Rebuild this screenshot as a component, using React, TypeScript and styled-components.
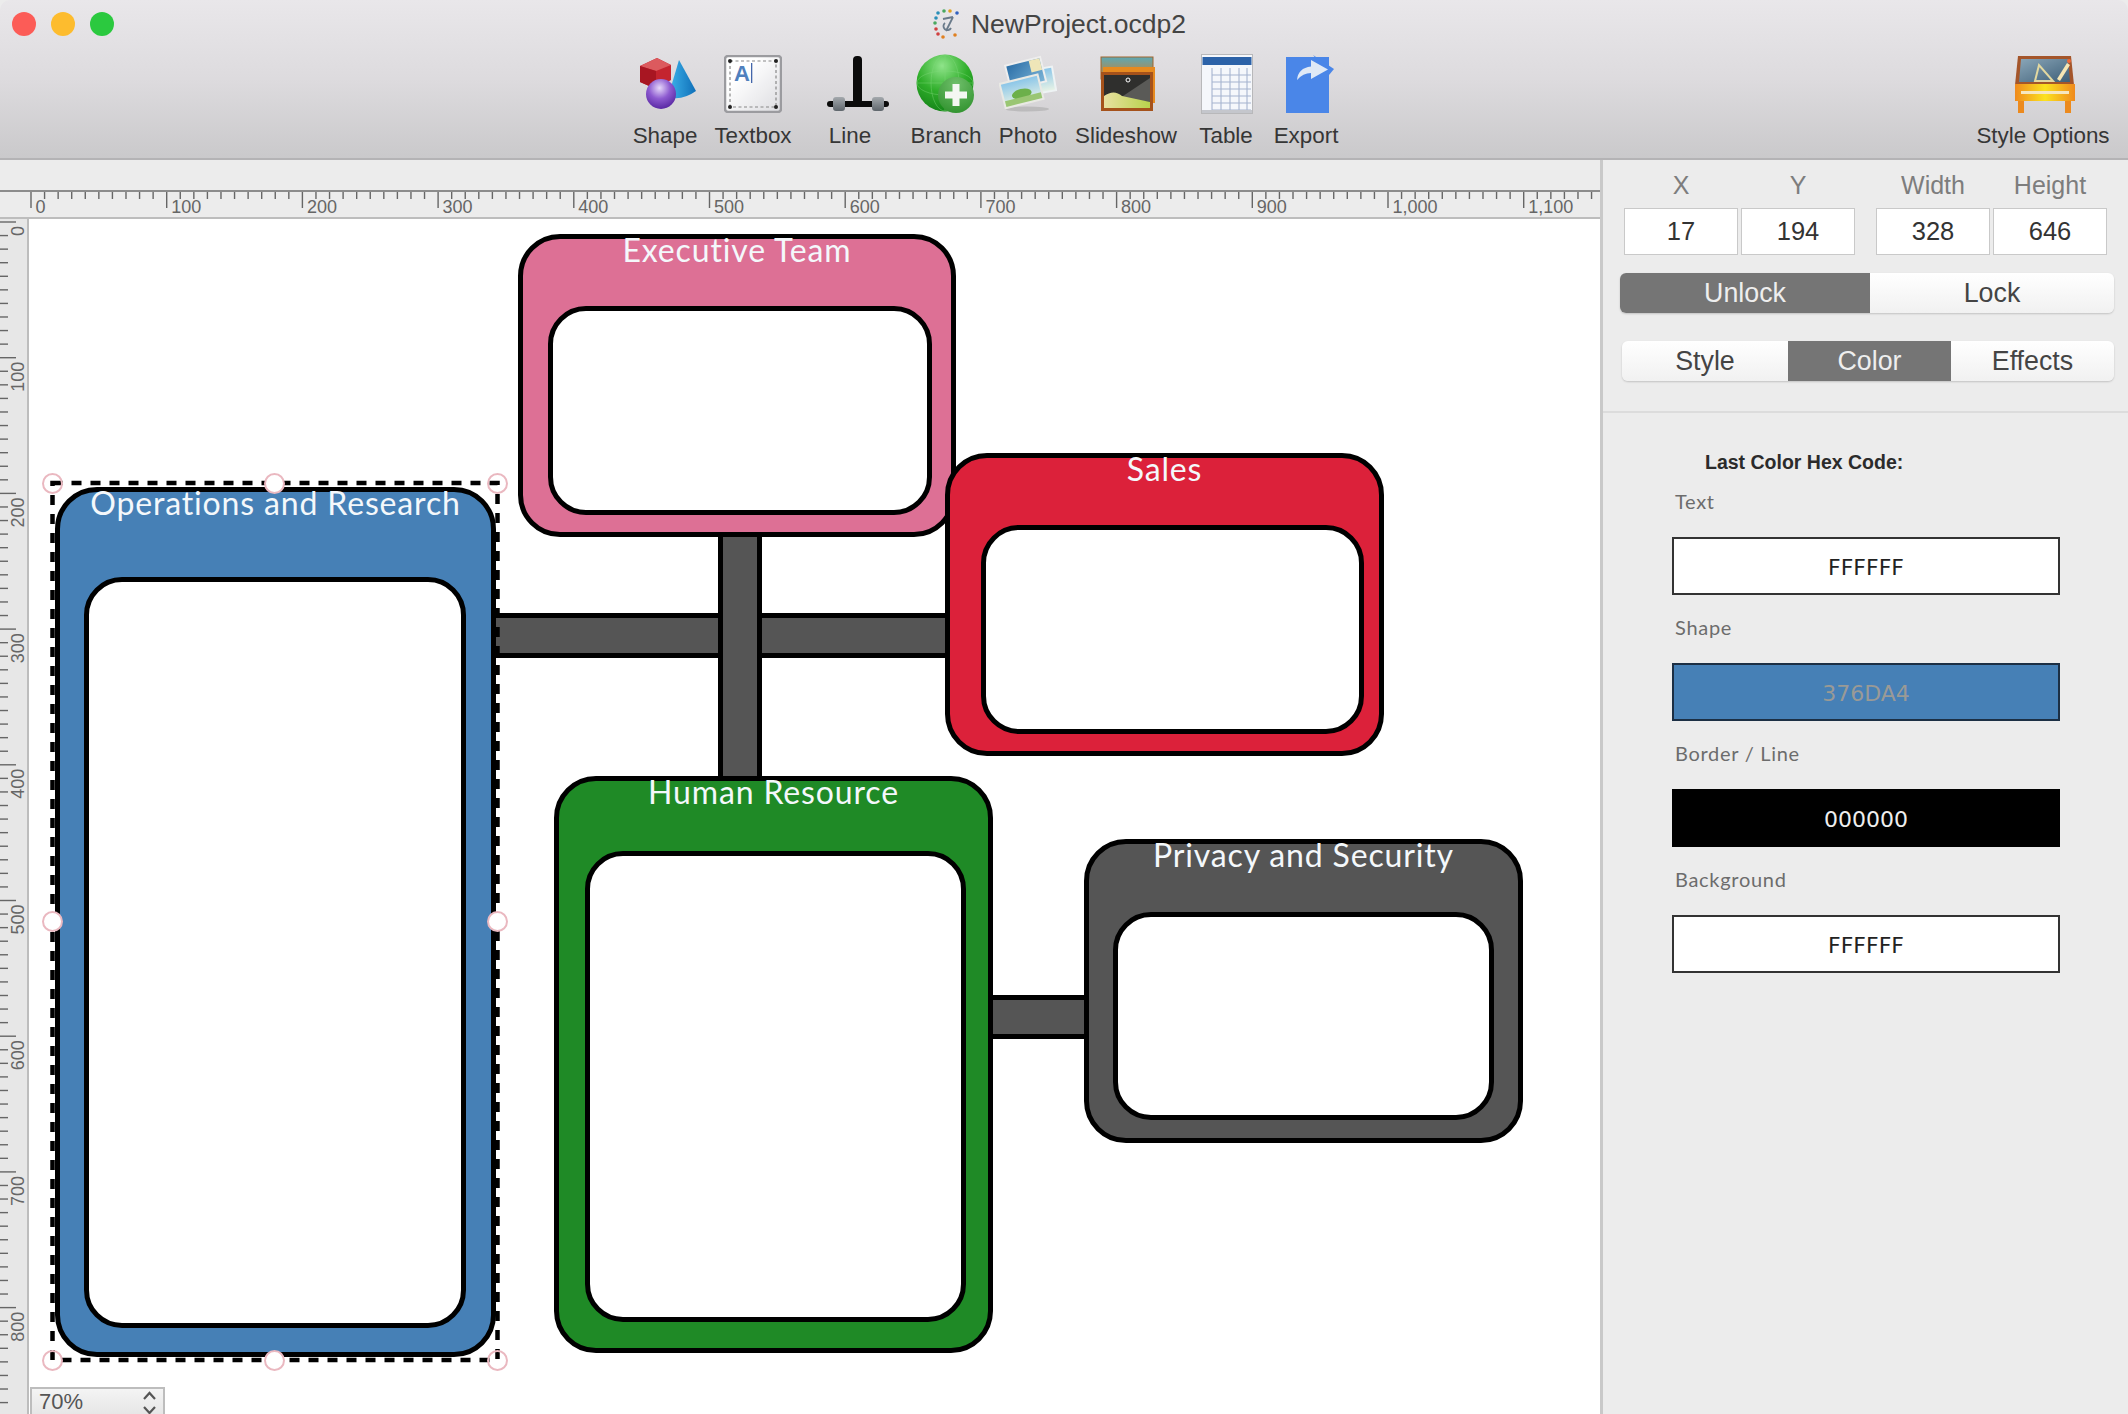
import React from "react";
import styled, { createGlobalStyle } from "styled-components";

const SANS = '"Liberation Sans", Arial, sans-serif';
const ROUND = 'Lato, "Liberation Sans", sans-serif';

const Global = createGlobalStyle`
  html, body { margin: 0; padding: 0; background: #ececec; }
  * { box-sizing: border-box; }
`;

const Win = styled.div`
  width: 2128px; height: 1414px; overflow: hidden;
  display: flex; flex-direction: column;
  font-family: ${SANS}; background: #ececec;
`;
const Header = styled.header`
  height: 160px; flex: none;
  background: linear-gradient(#e9e7ea 0%, #dddbde 50%, #cac9cb 100%);
  border-bottom: 2px solid #b4b3b5;
  border-radius: 10px 10px 0 0;
`;
const TitleRow = styled.div`
  height: 48px; display: grid; grid-template-columns: 1fr auto 1fr; align-items: center;
  padding-left: 12px;
`;
const Lights = styled.div`display: flex; gap: 15px;`;
const Light = styled.span<{ $c: string }>`
  width: 24px; height: 24px; border-radius: 50%; background: ${p => p.$c};
`;
const Title = styled.div`
  display: flex; align-items: center; gap: 10px; font-size: 26.5px; color: #444; margin-right: 21px;
`;
const Toolbar = styled.div`display: flex; padding-left: 624px; margin-top: 3px;`;
const Tool = styled.div<{ $w: number; $right?: boolean }>`
  width: ${p => p.$w}px; flex: none; display: flex; flex-direction: column; align-items: center;
  margin-left: ${p => (p.$right ? "auto" : "0")};
`;
const ToolIcon = styled.div<{ $shift?: number }>`
  height: 66px; display: flex; align-items: center; justify-content: center;
  margin-left: ${p => p.$shift ?? 0}px;
`;
const ToolLabel = styled.div`font-size: 22.4px; line-height: 26px; color: #363636; margin-top: 6px; white-space: nowrap;`;

const Body = styled.div`flex: 1; display: flex; min-height: 0;`;
const Work = styled.div`
  width: 1603px; flex: none; display: flex; flex-direction: column;
  border-right: 3px solid #c9c9c9;
`;
const Strip = styled.div`height: 30px; flex: none; background: #ececec;`;
const TopRuler = styled.div`
  height: 29px; flex: none; background: #ececec;
  border-top: 2px solid #8c8c8c; border-bottom: 2px solid #bdbdbd; overflow: hidden;
`;
const RulerSvg = styled.svg`display: block; font-family: ${SANS}; fill: #666;`;
const Main = styled.div`flex: 1; display: flex; min-height: 0;`;
const SideRuler = styled.div`
  width: 29px; flex: none; background: #e7e7e7; border-right: 2px solid #bdbdbd; overflow: hidden;
`;
const Canvas = styled.div`flex: 1; position: relative; background: #fff; overflow: hidden;`;

const Node = styled.div<{ $x: number; $y: number; $w: number; $h: number; $c: string; $pl: number; $pr: number; $pb: number }>`
  position: absolute;
  left: ${p => p.$x - 29}px; top: ${p => p.$y - 219}px;
  width: ${p => p.$w}px; height: ${p => p.$h}px;
  background: ${p => p.$c};
  border: 5px solid #000; border-radius: 42px;
  display: flex; flex-direction: column;
  padding: 0 ${p => p.$pr}px ${p => p.$pb}px ${p => p.$pl}px;
`;
const NodeTitle = styled.div<{ $top: number; $pl: number; $pr: number }>`
  height: ${p => p.$top}px; flex: none;
  margin: -5px ${p => -p.$pr}px 5px ${p => -p.$pl}px;
  text-align: center;
  font-family: ${ROUND}; font-size: 32px; line-height: 32px; color: #f4f8fb; white-space: nowrap;
  letter-spacing: 0.85px;
`;
const NodeInner = styled.div`flex: 1; background: #fff; border: 5px solid #000; border-radius: 38px;`;
const Conn = styled.div<{ $x: number; $y: number; $w: number; $h: number; $v?: boolean }>`
  position: absolute;
  left: ${p => p.$x - 29}px; top: ${p => p.$y - 219}px;
  width: ${p => p.$w}px; height: ${p => p.$h}px;
  background: #555;
  border: 0 solid #000;
  ${p => (p.$v ? "border-width: 0 5px;" : "border-width: 5px 0;")}
`;
const SelSvg = styled.svg`position: absolute; left: 0; top: 0; pointer-events: none;`;
const Handle = styled.span<{ $x: number; $y: number; $fill?: boolean }>`
  position: absolute; left: ${p => p.$x - 29 - 10.5}px; top: ${p => p.$y - 219 - 10.5}px;
  width: 21px; height: 21px; border-radius: 50%;
  border: 2px solid #eab8c0;
  background: ${p => (p.$fill ? "#fff" : "transparent")};
`;
const ZoomBox = styled.div`
  position: absolute; left: 1px; bottom: -4px; width: 135px; height: 31px;
  border: 2px solid #bdbdbd; border-bottom: 0;
  background: linear-gradient(#f4f4f4, #e4e4e4);
  display: flex; align-items: center; justify-content: space-between;
  padding: 0 5px 3px 7px; font-size: 22px; color: #555;
`;

const Panel = styled.aside`flex: 1; background: #ececec; min-width: 0;`;
const TopSection = styled.section`
  height: 253px; padding-top: 12px; border-bottom: 2px solid #dcdcdc;
`;
const Fields = styled.div`display: flex; gap: 21px; margin-left: 21px;`;
const FieldPair = styled.div`display: flex; gap: 3px;`;
const Field = styled.div`width: 114px; display: flex; flex-direction: column; align-items: center;`;
const FieldLabel = styled.div`font-size: 25px; line-height: 26px; color: #7d7d7d;`;
const FieldValue = styled.div`
  margin-top: 10px; width: 100%; height: 47px; background: #fff; border: 1.5px solid #c9c9c9;
  display: flex; align-items: center; justify-content: center; font-size: 25.5px; color: #333;
`;
const Seg = styled.div<{ $ml: number; $mt: number; $h: number }>`
  display: flex; height: ${p => p.$h}px; margin: ${p => p.$mt}px 0 0 ${p => p.$ml}px; width: ${p => 2114 - 1603 - p.$ml}px;
  border-radius: 6px; box-shadow: 0 1px 2px rgba(0,0,0,.18); overflow: hidden;
  background: linear-gradient(#fff, #f1f1f1);
`;
const SegBtn = styled.div<{ $w: number; $on?: boolean }>`
  width: ${p => p.$w}px; flex: none; display: flex; align-items: center; justify-content: center;
  font-size: 26.8px; color: ${p => (p.$on ? "#eee" : "#444")};
  background: ${p => (p.$on ? "#757575" : "transparent")};
`;
const ColorSection = styled.section`padding-top: 35px;`;
const HexTitle = styled.div`
  margin-left: 102px; font-size: 19.5px; line-height: 28px; font-weight: 700; color: #2b2b2b;
`;
const ColorRow = styled.div<{ $mt: number }>`margin-top: ${p => p.$mt}px;`;
const ColorLabel = styled.div`
  margin-left: 72px; font-family: ${ROUND}; font-size: 20px; line-height: 26px; color: #6c6c6c; letter-spacing: .7px;
`;
const ColorBox = styled.div<{ $bg: string; $fg: string; $bc: string }>`
  margin: 23px 0 0 69px; width: 388px; height: 58px; padding-top: 2px;
  background: ${p => p.$bg}; color: ${p => p.$fg}; border: 2px solid ${p => p.$bc};
  display: flex; align-items: center; justify-content: center;
  font-family: "DejaVu Sans", sans-serif; font-size: 22px;
`;

const topTicks = Array.from({ length: 118 }, (_, i) => i * 10);
const sideTicks = Array.from({ length: 89 }, (_, i) => i * 10);
const S = 1.357;

const TopRulerArt = () => (
  <RulerSvg width="1600" height="25" viewBox="0 0 1600 25">
    {topTicks.map(v => {
      const x = 31 + v * S;
      const major = v % 100 === 0;
      return (
        <g key={v}>
          <line x1={x} x2={x} y1={0} y2={major ? 16 : 7} stroke="#666" strokeWidth="1.4" />
          {major && (
            <text x={x + 4.5} y={21} fontSize="18">
              {v >= 1000 ? v.toLocaleString("en-US") : v}
            </text>
          )}
        </g>
      );
    })}
  </RulerSvg>
);
const SideRulerArt = () => (
  <RulerSvg width="27" height="1195" viewBox="0 0 27 1195">
    {sideTicks.map(v => {
      const y = 3 + v * S;
      const major = v % 100 === 0;
      return (
        <g key={v}>
          <line x1={0} x2={major ? 16 : 8} y1={y} y2={y} stroke="#666" strokeWidth="1.4" />
          {major && (
            <text transform={`translate(24 ${y + 4}) rotate(-90)`} textAnchor="end" fontSize="18">
              {v}
            </text>
          )}
        </g>
      );
    })}
  </RulerSvg>
);

const ShapeIcon = () => (
  <svg width="58" height="54" viewBox="0 0 58 54">
    <defs>
      <linearGradient id="cone" x1="0" x2="1"><stop offset="0" stopColor="#3fb4ec" /><stop offset="1" stopColor="#0f6fb8" /></linearGradient>
      <radialGradient id="ball" cx=".45" cy=".3" r=".8"><stop offset="0" stopColor="#e6d8fa" /><stop offset=".45" stopColor="#8d5ad0" /><stop offset="1" stopColor="#4a1a96" /></radialGradient>
    </defs>
    <path d="M41 3 L58 34 Q44 44 30 40 Z" fill="url(#cone)" />
    <path d="M2 9 L19 1 L33 8 L33 23 L18 32 L2 25 Z" fill="#c4242f" />
    <path d="M2 9 L18 14 L33 8 L19 1 Z" fill="#dc5a5e" />
    <path d="M18 14 L18 32 L2 25 L2 9 Z" fill="#a81622" />
    <circle cx="23" cy="37" r="15" fill="url(#ball)" />
  </svg>
);
const TextboxIcon = () => (
  <svg width="58" height="58" viewBox="0 0 58 58">
    <defs><linearGradient id="tb" x1="0" y1="0" x2="1" y2="1"><stop offset=".3" stopColor="#fff" /><stop offset="1" stopColor="#dcdce0" /></linearGradient></defs>
    <rect x="1" y="1" width="56" height="56" rx="3" fill="url(#tb)" stroke="#9b9b9f" strokeWidth="2.5" />
    <rect x="6" y="6" width="46" height="46" fill="none" stroke="#888" strokeWidth="1.2" strokeDasharray="3 2.5" />
    {[[6, 6], [52, 6], [6, 52], [52, 52]].map(([x, y]) => <circle key={x * 100 + y} cx={x} cy={y} r="2" fill="#222" />)}
    <text x="10" y="26" fontSize="22" fontWeight="700" fill="#4f80bd" fontFamily={SANS}>A</text>
    <rect x="27" y="8" width="1.3" height="20" fill="#4466aa" />
  </svg>
);
const LineIcon = () => (
  <svg width="62" height="56" viewBox="0 0 62 56">
    <defs><linearGradient id="cyl" x1="0" y1="0" x2="0" y2="1"><stop offset="0" stopColor="#a4a9ad" /><stop offset="1" stopColor="#5f666c" /></linearGradient></defs>
    <rect x="26" y="0" width="9" height="48" rx="4" fill="#0b0b0b" />
    <rect x="0" y="45" width="62" height="6" rx="3" fill="#0b0b0b" />
    <rect x="6" y="41" width="12" height="14" rx="3" fill="url(#cyl)" />
    <rect x="45" y="41" width="12" height="14" rx="3" fill="url(#cyl)" />
  </svg>
);
const BranchIcon = () => (
  <svg width="60" height="60" viewBox="0 0 60 60">
    <defs>
      <radialGradient id="gr" cx=".45" cy=".2" r=".9"><stop offset="0" stopColor="#8fe48a" /><stop offset=".5" stopColor="#2fae2a" /><stop offset="1" stopColor="#0f7a14" /></radialGradient>
      <radialGradient id="gr2" cx=".5" cy=".2" r=".9"><stop offset="0" stopColor="#6fbf6a" /><stop offset="1" stopColor="#2c8f2a" /></radialGradient>
    </defs>
    <circle cx="29" cy="29" r="28.5" fill="url(#gr)" />
    <g stroke="#7fd87a" strokeWidth=".6" fill="none" opacity=".7">
      <ellipse cx="29" cy="29" rx="14" ry="28" /><ellipse cx="29" cy="29" rx="28" ry="12" /><path d="M1 29H57M29 1V57" />
    </g>
    <circle cx="40" cy="41" r="18" fill="url(#gr2)" />
    <path d="M36.500 30h7v7.500h7.500v7h-7.500v7.500h-7v-7.500h-7.500v-7h7.500z" fill="#f4f7f2" />
  </svg>
);
const PhotoIcon = () => (
  <svg width="58" height="58" viewBox="0 0 58 58">
    <defs>
      <linearGradient id="sky" x1="0" y1="0" x2="0" y2="1"><stop offset="0" stopColor="#8cc6e8" /><stop offset="1" stopColor="#e6f2e6" /></linearGradient>
      <linearGradient id="sea" x1="0" y1="0" x2="1" y2="1"><stop offset="0" stopColor="#2c6fa8" /><stop offset="1" stopColor="#7ab3d6" /></linearGradient>
    </defs>
    <ellipse cx="28" cy="54" rx="22" ry="2.500" fill="#aaa" opacity=".6" />
    <g transform="rotate(-10 46 24)"><rect x="37" y="12" width="19" height="26" fill="#eef3f4" /><rect x="39" y="14" width="15" height="22" fill="url(#sky)" /></g>
    <g transform="rotate(-14 26 16)"><rect x="7" y="5" width="38" height="27" fill="#eee" /><rect x="9" y="7" width="34" height="23" fill="url(#sea)" /><rect x="32" y="7" width="11" height="12" fill="#efe6b8" /></g>
    <g transform="rotate(-14 22 36)"><rect x="2" y="23" width="41" height="27" fill="#e9e9e4" /><rect x="4" y="25" width="37" height="23" fill="url(#sky)" /><ellipse cx="22" cy="39" rx="10" ry="5" fill="#6cb04a" /><rect x="4" y="42" width="37" height="6" fill="#9ac673" /></g>
  </svg>
);
const SlideIcon = () => (
  <svg width="56" height="56" viewBox="0 0 56 56">
    <defs>
      <linearGradient id="sun" x1="0" y1="0" x2="0" y2="1"><stop offset="0" stopColor="#5ba9b6" /><stop offset="1" stopColor="#d87a20" /></linearGradient>
      <linearGradient id="grass" x1="0" y1="0" x2="1" y2="0"><stop offset="0" stopColor="#e8e0a0" /><stop offset="1" stopColor="#b8d24c" /></linearGradient>
    </defs>
    <rect x="1" y="1" width="52" height="22" fill="url(#sun)" stroke="#a1642d" strokeWidth="1" />
    <rect x="3" y="11" width="52" height="36" fill="#e68a1f" />
    <rect x="1" y="16" width="52" height="39" fill="#a5521b" />
    <rect x="4" y="19" width="46" height="33" fill="#2f2f2d" />
    <path d="M20 42 L50 22 L50 46 Z" fill="#5a5a57" />
    <path d="M4 52V40Q14 33 22 40L50 46V52Z" fill="url(#grass)" />
    <circle cx="28" cy="24" r="2" fill="none" stroke="#fff" strokeWidth="1" />
  </svg>
);
const TableIcon = () => (
  <svg width="52" height="60" viewBox="0 0 52 60">
    <rect x=".5" y=".5" width="51" height="59" fill="#f5f7fb" stroke="#b8b8ba" />
    <rect x="1.500" y="3" width="49" height="8" fill="#2c62a8" />
    <g stroke="#a6b4cf" strokeWidth="1.1">
      {[11, 20, 29, 38, 46].map(x => <line key={x} x1={x} x2={x} y1="14" y2="58" />)}
      {[21, 28, 35, 42, 49, 56].map(y => <line key={y} x1="11" x2="50" y1={y} y2={y} />)}
    </g>
    <rect x="1" y="56" width="50" height="3" fill="#c4c6cc" />
  </svg>
);
const ExportIcon = () => (
  <svg width="48" height="58" viewBox="0 0 48 58">
    <rect x="0" y="2" width="43" height="56" fill="#4a86e8" />
    <path d="M27 0 L48 14 L43 20 Z" fill="#4a86e8" />
    <path d="M11 25 Q12 13 25 11.500 L25 5 L42 14.500 L25 24 L25 18 Q17 18 11 25Z" fill="#dfe9f6" />
  </svg>
);
const StyleIcon = () => (
  <svg width="60" height="58" viewBox="0 0 60 58">
    <defs>
      <linearGradient id="desk" x1="0" x2="1"><stop offset="0" stopColor="#f08a1d" /><stop offset=".5" stopColor="#fbe21f" /><stop offset="1" stopColor="#f08a1d" /></linearGradient>
      <linearGradient id="board" x1="0" y1="0" x2="1" y2="1"><stop offset="0" stopColor="#8aa6b8" /><stop offset="1" stopColor="#3e5f78" /></linearGradient>
    </defs>
    <path d="M3 1 L56 1 L59 30 L0 30Z" fill="#a4552a" />
    <path d="M6 4 L53 4 L55 27 L4 27Z" fill="url(#board)" />
    <path d="M20 26 L38 26 L24 10Z" fill="none" stroke="#e3d8a0" strokeWidth="2" />
    <path d="M42 24 L52 8 L55 10 L45 26Z" fill="#f6e6b4" />
    <circle cx="54" cy="6" r="2" fill="#f06a3a" />
    <rect x="0" y="29" width="60" height="17" fill="url(#desk)" />
    <rect x="6" y="36" width="48" height="3" fill="#f6e7c0" />
    <rect x="3" y="46" width="6" height="12" fill="#ec8a1e" />
    <rect x="50" y="46" width="6" height="12" fill="#ec8a1e" />
  </svg>
);
const DocIcon = () => (
  <svg width="28" height="30" viewBox="0 0 28 30">
    {[[5, 4, "#2a8fb8"], [3, 9, "#2a8fb8"], [2, 14, "#4aa860"], [3, 20, "#d04040"], [5, 25, "#d04040"], [10, 28, "#e08020"], [22, 26, "#e08020"], [24, 4, "#3060c0"], [17, 2, "#e0a020"], [11, 2, "#4aa860"]].map(([x, y, c], i) => (
      <circle key={i} cx={x as number} cy={y as number} r="1.800" fill={c as string} />
    ))}
    <path d="M10 10 L20 8 M20 8 L13 22 M12 14 a4 4 0 1 0 6 5" stroke="#6a7a8a" strokeWidth="1.800" fill="none" />
  </svg>
);
const ZoomArrows = () => (
  <svg width="17" height="27" viewBox="0 0 17 27">
    <path d="M3 10 L8.500 4 L14 10 M3 18 L8.500 24 L14 18" fill="none" stroke="#555" strokeWidth="2.200" />
  </svg>
);

const tools = [
  { l: "Shape", w: 82, s: 3, I: ShapeIcon },
  { l: "Textbox", w: 94, s: 0, I: TextboxIcon },
  { l: "Line", w: 100, s: 15, I: LineIcon },
  { l: "Branch", w: 92, s: 0, I: BranchIcon },
  { l: "Photo", w: 72, s: 0, I: PhotoIcon },
  { l: "Slideshow", w: 124, s: 3, I: SlideIcon },
  { l: "Table", w: 76, s: 1, I: TableIcon },
  { l: "Export", w: 84, s: 7, I: ExportIcon },
];

const nodes = [
  { t: "Executive Team", x: 518, y: 234, w: 438, h: 303, c: "#dd7095", top: 67, pl: 25, pr: 19, pb: 17 },
  { t: "Sales", x: 945, y: 453, w: 439, h: 303, c: "#dc213a", top: 67, pl: 31, pr: 15, pb: 17 },
  { t: "Operations and Research", x: 55, y: 487, w: 441, h: 870, c: "#4680b6", top: 85, pl: 24, pr: 25, pb: 24 },
  { t: "Human Resource", x: 554, y: 776, w: 439, h: 577, c: "#1f8a26", top: 70, pl: 26, pr: 22, pb: 26 },
  { t: "Privacy and Security", x: 1084, y: 839, w: 439, h: 304, c: "#555555", top: 68, pl: 24, pr: 24, pb: 18 },
];

const colors = [
  { l: "Text", v: "FFFFFF", bg: "#fff", fg: "#222", bc: "#333" },
  { l: "Shape", v: "376DA4", bg: "#4680b6", fg: "#9a9a96", bc: "#1c2f44" },
  { l: "Border / Line", v: "000000", bg: "#000", fg: "#eee", bc: "#000" },
  { l: "Background", v: "FFFFFF", bg: "#fff", fg: "#222", bc: "#333" },
];

export default function App() {
  return (
    <Win>
      <Global />
      <Header>
        <TitleRow>
          <Lights>
            <Light $c="#fc5c57" />
            <Light $c="#fdbc2e" />
            <Light $c="#2bc93f" />
          </Lights>
          <Title>
            <DocIcon />
            NewProject.ocdp2
          </Title>
          <span />
        </TitleRow>
        <Toolbar>
          {tools.map(({ l, w, s, I }) => (
            <Tool key={l} $w={w}>
              <ToolIcon $shift={s}><I /></ToolIcon>
              <ToolLabel>{l}</ToolLabel>
            </Tool>
          ))}
          <Tool $w={170} $right>
            <ToolIcon $shift={3}><StyleIcon /></ToolIcon>
            <ToolLabel>Style Options</ToolLabel>
          </Tool>
        </Toolbar>
      </Header>
      <Body>
        <Work>
          <Strip />
          <TopRuler><TopRulerArt /></TopRuler>
          <Main>
            <SideRuler><SideRulerArt /></SideRuler>
            <Canvas>
              <Conn $x={493} $y={613} $w={457} $h={45} />
              <Conn $x={718} $y={536} $w={44} $h={244} $v />
              <Conn $x={990} $y={995} $w={96} $h={44} />
              {nodes.map(n => (
                <Node key={n.t} $x={n.x} $y={n.y} $w={n.w} $h={n.h} $c={n.c} $pl={n.pl} $pr={n.pr} $pb={n.pb}>
                  <NodeTitle $top={n.top} $pl={n.pl} $pr={n.pr}>{n.t}</NodeTitle>
                  <NodeInner />
                </Node>
              ))}
              <SelSvg width="1571" height="1195" viewBox="29 219 1571 1195">
                <rect x="52.500" y="483" width="445" height="877" fill="none" stroke="#000" strokeWidth="4.500" strokeDasharray="10 9" />
              </SelSvg>
              <Handle $x={52.5} $y={483} />
              <Handle $x={274} $y={483} $fill />
              <Handle $x={497.5} $y={483} />
              <Handle $x={52.5} $y={921} $fill />
              <Handle $x={497.5} $y={921} $fill />
              <Handle $x={52.5} $y={1360} />
              <Handle $x={274} $y={1360} $fill />
              <Handle $x={497.5} $y={1360} />
              <ZoomBox>
                70%
                <ZoomArrows />
              </ZoomBox>
            </Canvas>
          </Main>
        </Work>
        <Panel>
          <TopSection>
            <Fields>
              <FieldPair>
                <Field><FieldLabel>X</FieldLabel><FieldValue>17</FieldValue></Field>
                <Field><FieldLabel>Y</FieldLabel><FieldValue>194</FieldValue></Field>
              </FieldPair>
              <FieldPair>
                <Field><FieldLabel>Width</FieldLabel><FieldValue>328</FieldValue></Field>
                <Field><FieldLabel>Height</FieldLabel><FieldValue>646</FieldValue></Field>
              </FieldPair>
            </Fields>
            <Seg $ml={17} $mt={18} $h={40}>
              <SegBtn $w={250} $on>Unlock</SegBtn>
              <SegBtn $w={244}>Lock</SegBtn>
            </Seg>
            <Seg $ml={19} $mt={28} $h={40}>
              <SegBtn $w={166}>Style</SegBtn>
              <SegBtn $w={163} $on>Color</SegBtn>
              <SegBtn $w={163}>Effects</SegBtn>
            </Seg>
          </TopSection>
          <ColorSection>
            <HexTitle>Last Color Hex Code:</HexTitle>
            {colors.map((c, i) => (
              <ColorRow key={c.l} $mt={i === 0 ? 12 : 19}>
                <ColorLabel>{c.l}</ColorLabel>
                <ColorBox $bg={c.bg} $fg={c.fg} $bc={c.bc}>{c.v}</ColorBox>
              </ColorRow>
            ))}
          </ColorSection>
        </Panel>
      </Body>
    </Win>
  );
}
